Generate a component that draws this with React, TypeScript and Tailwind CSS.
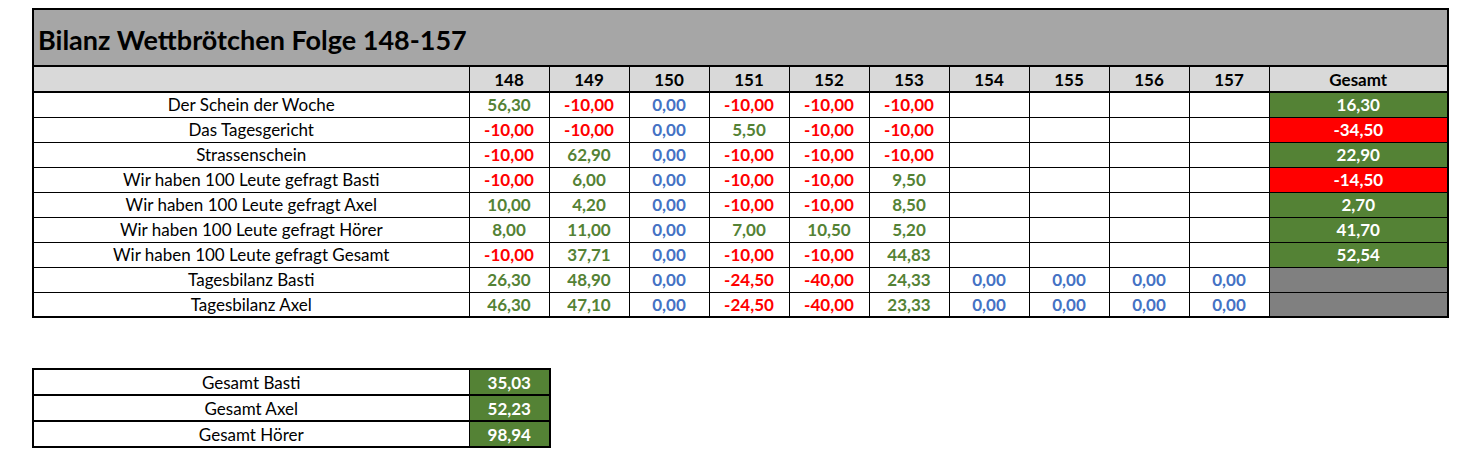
const episodes = ['148', '149', '150', '151', '152', '153', '154', '155', '156', '157']

type Cell = { v: string; c: 'g' | 'r' | 'b' } | null

const g = (v: string): Cell => ({ v, c: 'g' })
const r = (v: string): Cell => ({ v, c: 'r' })
const b = (v: string): Cell => ({ v, c: 'b' })

const rows: { label: string; cells: Cell[]; total: string; tone: 'green' | 'red' | 'gray' }[] = [
  { label: 'Der Schein der Woche', cells: [g('56,30'), r('-10,00'), b('0,00'), r('-10,00'), r('-10,00'), r('-10,00'), null, null, null, null], total: '16,30', tone: 'green' },
  { label: 'Das Tagesgericht', cells: [r('-10,00'), r('-10,00'), b('0,00'), g('5,50'), r('-10,00'), r('-10,00'), null, null, null, null], total: '-34,50', tone: 'red' },
  { label: 'Strassenschein', cells: [r('-10,00'), g('62,90'), b('0,00'), r('-10,00'), r('-10,00'), r('-10,00'), null, null, null, null], total: '22,90', tone: 'green' },
  { label: 'Wir haben 100 Leute gefragt Basti', cells: [r('-10,00'), g('6,00'), b('0,00'), r('-10,00'), r('-10,00'), g('9,50'), null, null, null, null], total: '-14,50', tone: 'red' },
  { label: 'Wir haben 100 Leute gefragt Axel', cells: [g('10,00'), g('4,20'), b('0,00'), r('-10,00'), r('-10,00'), g('8,50'), null, null, null, null], total: '2,70', tone: 'green' },
  { label: 'Wir haben 100 Leute gefragt Hörer', cells: [g('8,00'), g('11,00'), b('0,00'), g('7,00'), g('10,50'), g('5,20'), null, null, null, null], total: '41,70', tone: 'green' },
  { label: 'Wir haben 100 Leute gefragt Gesamt', cells: [r('-10,00'), g('37,71'), b('0,00'), r('-10,00'), r('-10,00'), g('44,83'), null, null, null, null], total: '52,54', tone: 'green' },
  { label: 'Tagesbilanz Basti', cells: [g('26,30'), g('48,90'), b('0,00'), r('-24,50'), r('-40,00'), g('24,33'), b('0,00'), b('0,00'), b('0,00'), b('0,00')], total: '', tone: 'gray' },
  { label: 'Tagesbilanz Axel', cells: [g('46,30'), g('47,10'), b('0,00'), r('-24,50'), r('-40,00'), g('23,33'), b('0,00'), b('0,00'), b('0,00'), b('0,00')], total: '', tone: 'gray' },
]

const textColor = { g: 'text-[#548235]', r: 'text-[#ff0000]', b: 'text-[#4472c4]' }
const toneBg = { green: 'bg-[#548235]', red: 'bg-[#ff0000]', gray: 'bg-[#808080]' }

const totals = [
  { label: 'Gesamt Basti', value: '35,03' },
  { label: 'Gesamt Axel', value: '52,23' },
  { label: 'Gesamt Hörer', value: '98,94' },
]

export default function App() {
  return (
    <div className="min-h-screen bg-white pt-[8px] pl-[32px] text-black [font-family:Lato,'Open_Sans',sans-serif]">
      {/* Main sheet */}
      <table className="table-fixed border-collapse border-2 border-black w-[1415px]">
        <colgroup>
          <col className="w-[436px]" />
          {episodes.map((e) => (
            <col key={e} className="w-[80px]" />
          ))}
          <col className="w-[179px]" />
        </colgroup>
        <tbody>
          <tr className="h-[57px] bg-[#a6a6a6]">
            <td colSpan={12} className="border-b-2 border-black px-[4px] pt-[4px] text-left text-[27px] font-bold leading-none">
              Bilanz Wettbrötchen Folge 148-157
            </td>
          </tr>
          <tr className="h-[26px] bg-[#d9d9d9] text-[17px] font-bold">
            <td className="border-b-2 border-black" />
            {episodes.map((e) => (
              <td key={e} className="border-b-2 border-l border-black text-center leading-none">
                {e}
              </td>
            ))}
            <td className="border-b-2 border-l border-black text-center leading-none">Gesamt</td>
          </tr>
          {rows.map((row) => (
            <tr key={row.label} className="h-[25px] text-[17px]">
              <td className="border-b border-black text-center leading-none">{row.label}</td>
              {row.cells.map((cell, i) => (
                <td
                  key={i}
                  className={`border-b border-l border-black text-center font-bold leading-none ${cell ? textColor[cell.c] : ''}`}
                >
                  {cell ? cell.v : ''}
                </td>
              ))}
              <td className={`border-b border-l border-black text-center font-bold leading-none text-white ${toneBg[row.tone]}`}>
                {row.total}
              </td>
            </tr>
          ))}
        </tbody>
      </table>

      {/* Totals */}
      <table className="mt-[50px] table-fixed border-collapse border-2 border-black w-[517px]">
        <colgroup>
          <col className="w-[436px]" />
          <col className="w-[81px]" />
        </colgroup>
        <tbody>
          {totals.map((t) => (
            <tr key={t.label} className="h-[26px] text-[17px]">
              <td className="border-b-2 border-black text-center leading-none">{t.label}</td>
              <td className="border-b-2 border-l border-black bg-[#548235] text-center font-bold leading-none text-white">
                {t.value}
              </td>
            </tr>
          ))}
        </tbody>
      </table>
    </div>
  )
}
